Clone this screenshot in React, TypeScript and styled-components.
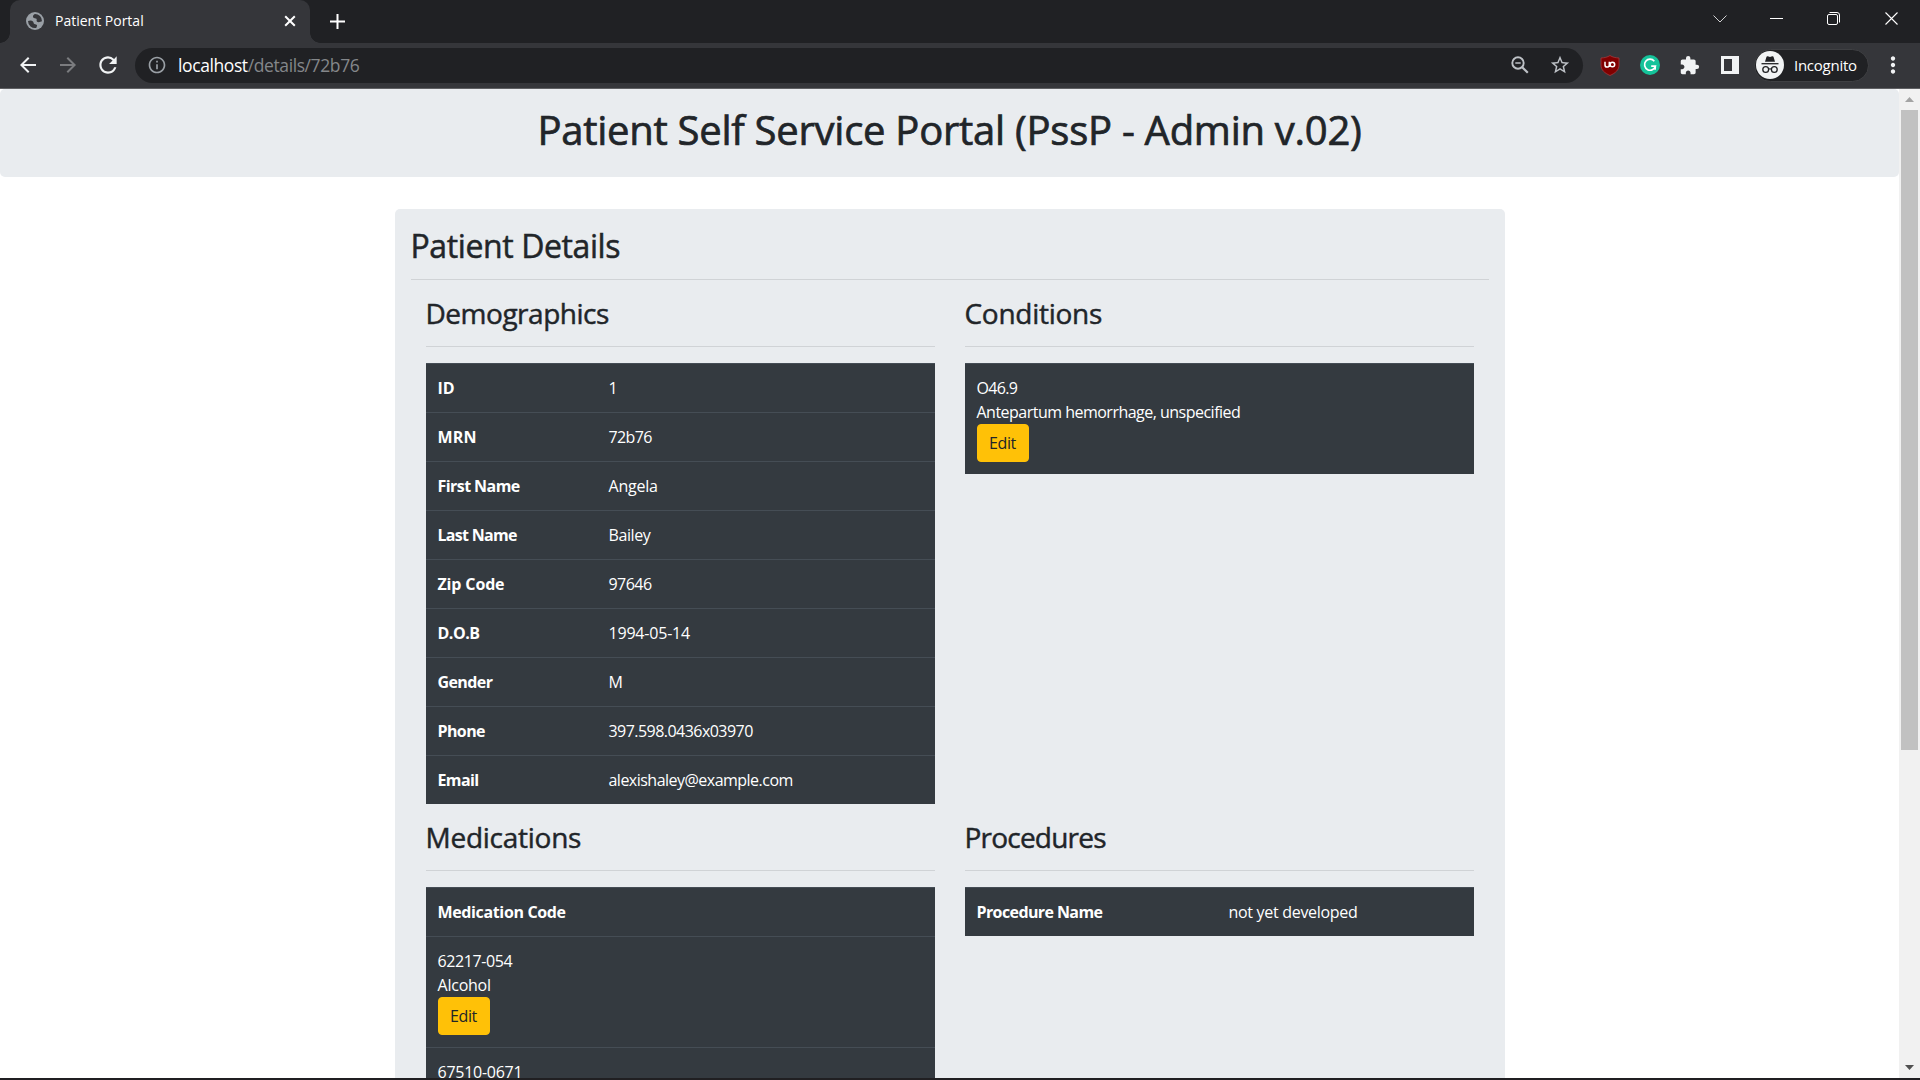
import React from "react";
import styled, { createGlobalStyle } from "styled-components";
import {
  MdArrowBack,
  MdArrowForward,
  MdExtension,
  MdInfoOutline,
  MdMoreVert,
  MdRefresh,
  MdStarBorder,
} from "react-icons/md";

const GlobalStyle = createGlobalStyle`
  *, *::before, *::after { box-sizing: border-box; }
  html, body { margin: 0; padding: 0; overflow: hidden; }
  body {
    font-family: "Open Sans", "Noto Sans", sans-serif;
    font-size: 16px;
    line-height: 1.5;
    color: #212529;
  }
`;

/* ---------- browser window ---------- */

const Window = styled.div`
  display: flex;
  flex-direction: column;
  width: 1920px;
  height: 1080px;
  overflow: hidden;
  background: #fff;
  border-bottom: 2px solid #201f22;
`;

const TabStrip = styled.div`
  display: flex;
  flex: none;
  height: 43px;
  padding-left: 10px;
  background: #202124;
`;

const Tab = styled.div`
  position: relative;
  display: flex;
  align-items: center;
  width: 300px;
  height: 43px;
  padding: 0 12px 1px 16px;
  border-radius: 10px 10px 0 0;
  background: #35363a;
  color: #fff;

  &::before,
  &::after {
    content: "";
    position: absolute;
    bottom: 0;
    width: 10px;
    height: 10px;
  }
  &::before {
    right: 100%;
    background: radial-gradient(circle at 0 0, transparent 9.5px, #35363a 10px);
  }
  &::after {
    left: 100%;
    background: radial-gradient(circle at 100% 0, transparent 9.5px, #35363a 10px);
  }
`;

const TabTitle = styled.span`
  flex: 1;
  margin-left: 11px;
  font-size: 14px;
  line-height: 20px;
`;

const TabIcon = styled.svg`
  display: block;
  flex: none;
`;

const NewTab = styled.div`
  display: flex;
  align-items: center;
  margin-left: 19px;
  padding-bottom: 1px;
`;

const WindowControls = styled.div`
  display: flex;
  margin-left: auto;
  height: 37px;
`;

const WindowControl = styled.div`
  display: flex;
  align-items: center;
  justify-content: center;
  width: 57px;

  &:not(:last-child) {
    padding-right: 2px;
  }
`;

const Toolbar = styled.div`
  display: flex;
  flex: none;
  align-items: center;
  height: 46px;
  padding: 0 7px 1px 8px;
  background: #35363a;
  border-bottom: 1px solid #5f6063;
  color: #f1f3f4;
`;

const IconSlot = styled.div<{ $color?: string }>`
  display: flex;
  flex: none;
  align-items: center;
  justify-content: center;
  width: 40px;
  height: 36px;
  padding-right: 1px;
  color: ${(p) => p.$color ?? "#f1f3f4"};
`;

const AddressBar = styled.div`
  display: flex;
  align-items: center;
  width: 1448px;
  height: 35px;
  margin: 0 7px;
  padding: 0 3px 0 12px;
  border-radius: 18px;
  background: #202124;
  color: #9aa0a6;
`;

const Url = styled.div`
  flex: 1;
  margin-left: 11px;
  font-size: 17.5px;
  line-height: 24px;
  letter-spacing: -0.4px;
  color: #84878a;
`;

const UrlHost = styled.span`
  color: #fff;
`;

const IncognitoBadge = styled.div`
  display: flex;
  align-items: center;
  width: 115px;
  height: 33px;
  margin: 0 4px;
  padding: 0 0 1px 1px;
  border: 1px solid #3f4043;
  border-radius: 17px;
  background: #202124;
  color: #fff;
  font-size: 15px;
  line-height: 22px;
  letter-spacing: -0.26px;
  gap: 10px;
`;

/* ---------- page ---------- */

const Viewport = styled.div`
  display: flex;
  flex: 1;
  min-height: 0;
`;

const Page = styled.main`
  flex: 1;
  min-width: 0;
  height: 100%;
  overflow: hidden;
`;

const Jumbotron = styled.header`
  height: 88px;
  padding: 17px 16px 15px;
  border-radius: 5px;
  background: #e9ecef;
  text-align: center;
`;

const Title = styled.h1`
  margin: 0;
  font-size: 40px;
  font-weight: 500;
  line-height: 48px;
  letter-spacing: -0.26px;
  -webkit-text-stroke: 0.7px currentColor;
`;

const Card = styled.section`
  width: 1110px;
  height: 1100px;
  margin: 32px auto 0;
  padding: 16px;
  border-radius: 5px;
  background: #e9ecef;
`;

const CardTitle = styled.h2`
  margin: 0;
  padding-top: 1.5px;
  height: 38.4px;
  font-size: 32px;
  font-weight: 500;
  line-height: 38.4px;
  letter-spacing: -0.4px;
  -webkit-text-stroke: 0.5px currentColor;
`;

const Rule = styled.hr`
  height: 1px;
  margin: 16px 0;
  border: 0;
  background: #d0d3d6;
`;

const Columns = styled.div`
  display: grid;
  grid-template-columns: 509px 509px;
  column-gap: 30px;
  padding: 0 15px;
`;

const Panel = styled.section`
  padding-bottom: 16px;
`;

const PanelTitle = styled.h3<{ $track: number }>`
  margin: 0;
  padding-top: 1px;
  height: 33.6px;
  font-size: 28px;
  font-weight: 500;
  line-height: 33.6px;
  letter-spacing: ${(p) => p.$track}px;
  -webkit-text-stroke: 0.45px currentColor;
`;

const Table = styled.div`
  background: #343a40;
  color: #fff;
`;

const Row = styled.div<{ $columns?: string }>`
  display: grid;
  grid-template-columns: ${(p) => p.$columns ?? "1fr"};
  border-top: 1px solid #454d55;
`;

const Cell = styled.div<{ $bold?: boolean; $track?: number }>`
  height: 48px;
  padding: 12.5px 12px 0;
  font-weight: ${(p) => (p.$bold ? 700 : 400)};
  letter-spacing: ${(p) => p.$track ?? -0.45}px;
`;

const Line = styled.div<{ $track: number }>`
  letter-spacing: ${(p) => p.$track}px;
`;

const EditButton = styled.button`
  display: block;
  width: 52px;
  height: 38px;
  padding: 0;
  border: 1px solid #ffc107;
  border-radius: 4px;
  background: #ffc107;
  color: #212529;
  font: inherit;
  letter-spacing: -0.4px;
`;

const EntryCell = styled(Cell)`
  height: 110px;
  padding-top: 12px;
`;

/* ---------- scrollbar ---------- */

const Scrollbar = styled.div`
  display: flex;
  flex: none;
  flex-direction: column;
  align-items: center;
  width: 21px;
  background: #f1f1f1;
`;

const ScrollArrow = styled.div`
  display: flex;
  align-items: center;
  justify-content: center;
  height: 21px;
  width: 21px;
`;

const Thumb = styled.div`
  width: 17px;
  height: 640px;
  margin-bottom: auto;
  background: #c1c1c1;
`;

/* ---------- icons ---------- */

const GlobeIcon = () => (
  <TabIcon width="18" height="18" viewBox="0 0 18 18">
    <circle cx="9" cy="9" r="9" fill="#9aa0a6" />
    <path d="M8.800 2C7.400 3 6.500 4.200 7.200 5.400c.9 1.100 2.500.4 3.300 1.400.7 1-.5 2 .6 2.900 1.200.9 3.400.3 4.900-.4A7 7 0 0 0 8.800 2z" fill="#35363a" />
    <path d="M2 9c1.800-.8 4-.7 5 .4.900 1 .3 2 1.400 2.600 1 .5 2.300.2 2.600 1.200.3 1-.6 1.700-.7 2.700A7 7 0 0 1 2 9z" fill="#35363a" />
  </TabIcon>
);

const ZoomOutIcon = () => (
  <svg width="18" height="18" viewBox="0 0 18 18" fill="none" stroke="currentColor">
    <circle cx="7" cy="7" r="5.700" strokeWidth="1.900" />
    <path d="M11.200 11.200l5.600 5.600" strokeWidth="2.200" />
    <path d="M4.300 7h5.400" strokeWidth="1.500" />
  </svg>
);

const UblockIcon = () => (
  <svg width="20" height="21" viewBox="0 0 20 21">
    <path d="M10 .5c2.600 1.700 5.400 2.300 9 2.500v7c0 5-3.500 8-9 10.500C4.500 18 1 15 1 10V3c3.600-.2 6.400-.8 9-2.500z" fill="#800000" stroke="#a3393c" strokeWidth=".8" />
    <path d="M5 6.800v3.100a2.150 2.150 0 0 0 4.300 0V6.800M9.300 6.800v5.200" fill="none" stroke="#fff" strokeWidth="1.500" />
    <circle cx="12.400" cy="9.500" r="2.300" fill="none" stroke="#fff" strokeWidth="1.500" />
  </svg>
);

const GrammarlyIcon = () => (
  <svg width="20" height="20" viewBox="0 0 20 20">
    <circle cx="10" cy="10" r="10" fill="#15c39a" />
    <path d="M14.300 6.200A5.500 5.500 0 1 0 15.400 11.100H11.200M15.300 11.100l-.2 3.700" fill="none" stroke="#fff" strokeWidth="1.700" />
  </svg>
);

const SidePanelIcon = () => (
  <svg width="18" height="18" viewBox="0 0 18 18">
    <path fillRule="evenodd" d="M0 0h18v18H0zM3 3v12h8V3z" fill="#f1f3f4" />
  </svg>
);

const IncognitoIcon = () => (
  <svg width="28" height="28" viewBox="0 0 28 28">
    <circle cx="14" cy="14" r="14" fill="#f1f3f4" />
    <path d="M9 10.800l1.500-5c.2-.6.800-.8 1.300-.6l2.200.7 2.200-.7c.5-.2 1.100 0 1.300.6l1.500 5z" fill="#202124" />
    <path d="M5.500 12.700h17" stroke="#202124" strokeWidth="1.300" />
    <circle cx="9.700" cy="18.500" r="2.900" fill="none" stroke="#202124" strokeWidth="1.300" />
    <circle cx="18.300" cy="18.500" r="2.900" fill="none" stroke="#202124" strokeWidth="1.300" />
    <path d="M12.600 18.200q1.400-.9 2.800 0" fill="none" stroke="#202124" strokeWidth="1.200" />
  </svg>
);

type Field = { label: string; value: string; lt: number; vt: number };

const demographics: Field[] = [
  { label: "ID", value: "1", lt: 0, vt: 0 },
  { label: "MRN", value: "72b76", lt: 0.2, vt: -0.6 },
  { label: "First Name", value: "Angela", lt: -0.56, vt: -0.23 },
  { label: "Last Name", value: "Bailey", lt: -0.7, vt: -0.4 },
  { label: "Zip Code", value: "97646", lt: -0.15, vt: -0.53 },
  { label: "D.O.B", value: "1994-05-14", lt: -0.5, vt: -0.2 },
  { label: "Gender", value: "M", lt: -0.6, vt: 0 },
  { label: "Phone", value: "397.598.0436x03970", lt: -0.6, vt: -0.54 },
  { label: "Email", value: "alexishaley@example.com", lt: -0.6, vt: -0.518 },
];

export default function App() {
  return (
    <>
      <GlobalStyle />
      <Window>
        <TabStrip>
          <Tab>
            <GlobeIcon />
            <TabTitle>Patient Portal</TabTitle>
            <TabIcon width="16" height="16" viewBox="0 0 16 16">
              <path d="M3.200 3.200l9.600 9.600M12.800 3.200l-9.600 9.600" stroke="#fff" strokeWidth="2" />
            </TabIcon>
          </Tab>
          <NewTab>
            <TabIcon width="17" height="17" viewBox="0 0 17 17">
              <path d="M8.500 1v15M1 8.500h15" stroke="#fff" strokeWidth="2" />
            </TabIcon>
          </NewTab>
          <WindowControls>
            <WindowControl>
              <svg width="14" height="14" viewBox="0 0 14 14">
                <path d="M.5 3.500L7 10l6.500-6.500" fill="none" stroke="#d0d0d2" strokeWidth="1" />
              </svg>
            </WindowControl>
            <WindowControl>
              <svg width="13" height="13" viewBox="0 0 13 13">
                <path d="M0 6.500h13" stroke="#fff" strokeWidth="1" />
              </svg>
            </WindowControl>
            <WindowControl>
              <svg width="13" height="13" viewBox="0 0 13 13">
                <rect x=".5" y="2.500" width="10" height="10" rx="1.500" fill="none" stroke="#fff" />
                <path d="M2.500.5H10A2.500 2.500 0 0 1 12.500 3v7.500" fill="none" stroke="#fff" />
              </svg>
            </WindowControl>
            <WindowControl>
              <svg width="13" height="13" viewBox="0 0 13 13">
                <path d="M.5.5l12 12M12.500.5l-12 12" stroke="#fff" strokeWidth="1.100" />
              </svg>
            </WindowControl>
          </WindowControls>
        </TabStrip>

        <Toolbar>
          <IconSlot><MdArrowBack size={24} /></IconSlot>
          <IconSlot $color="#7b7c7f"><MdArrowForward size={24} /></IconSlot>
          <IconSlot><MdRefresh size={26} /></IconSlot>
          <AddressBar>
            <MdInfoOutline size={20} />
            <Url><UrlHost>localhost</UrlHost>/details/72b76</Url>
            <IconSlot $color="#bdc1c6"><ZoomOutIcon /></IconSlot>
            <IconSlot $color="#bdc1c6"><MdStarBorder size={22} /></IconSlot>
          </AddressBar>
          <IconSlot><UblockIcon /></IconSlot>
          <IconSlot><GrammarlyIcon /></IconSlot>
          <IconSlot><MdExtension size={21} /></IconSlot>
          <IconSlot><SidePanelIcon /></IconSlot>
          <IncognitoBadge>
            <IncognitoIcon />
            Incognito
          </IncognitoBadge>
          <IconSlot><MdMoreVert size={26} /></IconSlot>
        </Toolbar>

        <Viewport>
          <Page>
            <Jumbotron>
              <Title>Patient Self Service Portal (PssP - Admin v.02)</Title>
            </Jumbotron>
            <Card>
              <CardTitle>Patient Details</CardTitle>
              <Rule />
              <Columns>
                <Panel>
                  <PanelTitle $track={-0.48}>Demographics</PanelTitle>
                  <Rule />
                  <Table>
                    {demographics.map((f) => (
                      <Row key={f.label} $columns="171px 1fr">
                        <Cell $bold $track={f.lt}>{f.label}</Cell>
                        <Cell $track={f.vt}>{f.value}</Cell>
                      </Row>
                    ))}
                  </Table>
                </Panel>
                <Panel>
                  <PanelTitle $track={-0.27}>Conditions</PanelTitle>
                  <Rule />
                  <Table>
                    <Row>
                      <EntryCell>
                        <Line $track={-0.7}>O46.9</Line>
                        <Line $track={-0.513}>Antepartum hemorrhage, unspecified</Line>
                        <EditButton>Edit</EditButton>
                      </EntryCell>
                    </Row>
                  </Table>
                </Panel>
                <Panel>
                  <PanelTitle $track={-0.26}>Medications</PanelTitle>
                  <Rule />
                  <Table>
                    <Row><Cell $bold $track={-0.36}>Medication Code</Cell></Row>
                    <Row>
                      <EntryCell>
                        <Line $track={-0.4}>62217-054</Line>
                        <Line $track={-0.23}>Alcohol</Line>
                        <EditButton>Edit</EditButton>
                      </EntryCell>
                    </Row>
                    <Row>
                      <EntryCell>
                        <Line $track={-0.26}>67510-0671</Line>
                      </EntryCell>
                    </Row>
                  </Table>
                </Panel>
                <Panel>
                  <PanelTitle $track={-0.78}>Procedures</PanelTitle>
                  <Rule />
                  <Table>
                    <Row $columns="252px 1fr">
                      <Cell $bold $track={-0.6}>Procedure Name</Cell>
                      <Cell $track={-0.3}>not yet developed</Cell>
                    </Row>
                  </Table>
                </Panel>
              </Columns>
            </Card>
          </Page>
          <Scrollbar>
            <ScrollArrow>
              <svg width="9" height="5" viewBox="0 0 9 5"><path d="M0 5L4.500 0 9 5z" fill="#a3a3a3" /></svg>
            </ScrollArrow>
            <Thumb />
            <ScrollArrow>
              <svg width="9" height="5" viewBox="0 0 9 5"><path d="M0 0l4.500 5L9 0z" fill="#505050" /></svg>
            </ScrollArrow>
          </Scrollbar>
        </Viewport>
      </Window>
    </>
  );
}
